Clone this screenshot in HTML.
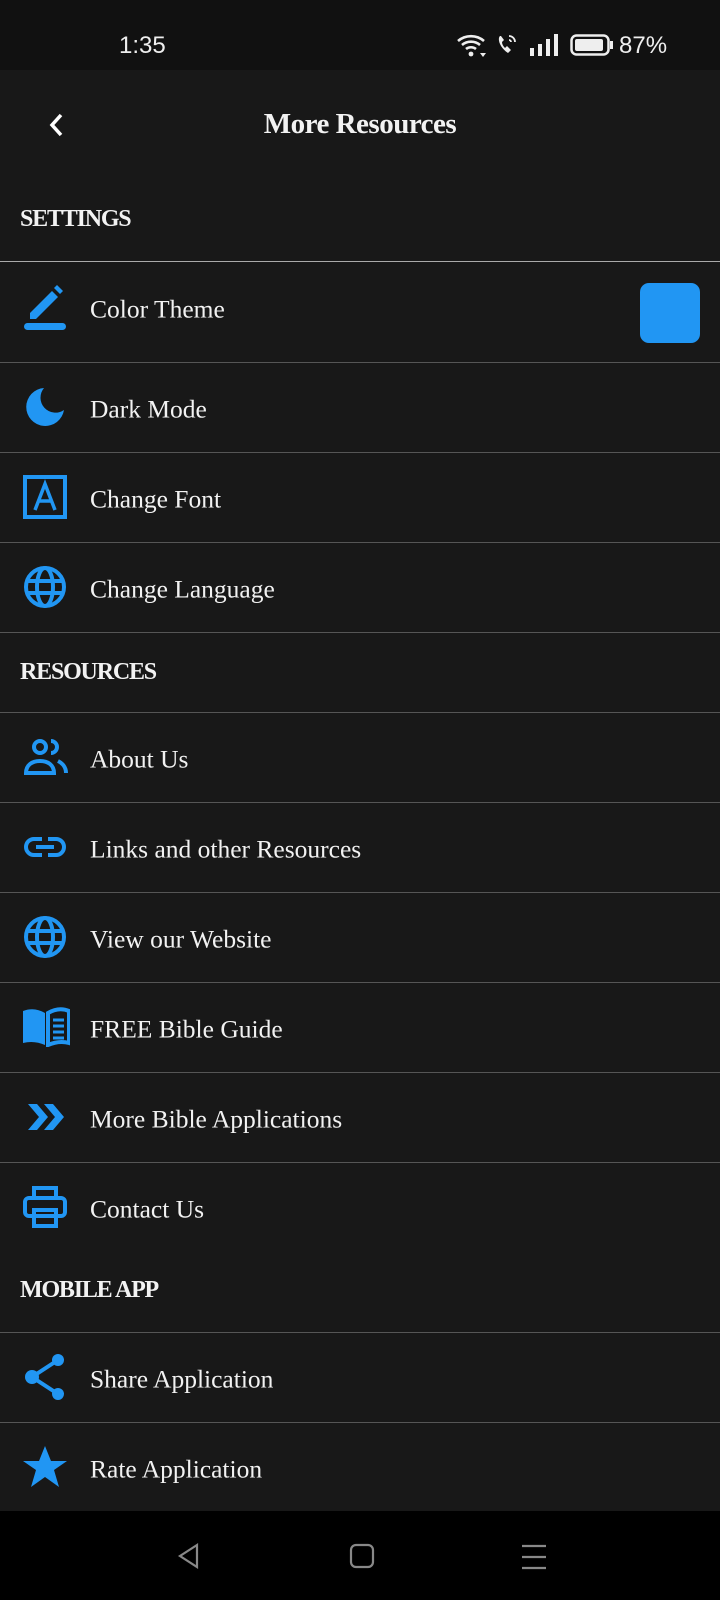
<!DOCTYPE html>
<html><head><meta charset="utf-8"><style>
*{margin:0;padding:0;box-sizing:border-box}
body{width:720px;height:1600px;background:#181818;font-family:"Liberation Serif",serif;color:#f2f2f2;position:relative;overflow:hidden}
.sb{position:absolute;top:0;left:0;width:720px;height:70px;background:#111;font-family:"Liberation Sans",sans-serif;color:#eee;font-size:23px}
.abs{position:absolute}
.title{position:absolute;top:108px;left:0;width:720px;text-align:center;font-size:29px;font-weight:bold;letter-spacing:-0.5px}
.hdr{position:absolute;left:20px;font-size:24px;font-weight:bold;letter-spacing:-1.2px}
.line{position:absolute;left:0;width:720px;height:1px;background:#555}
.row{position:absolute;left:0;width:720px;height:90px}
.row span{position:absolute;left:90px;top:50%;transform:translateY(-42%);font-size:25.5px}
.row svg{position:absolute;left:22px;top:50%;transform:translateY(-50%)}
.nav{position:absolute;top:1511px;left:0;width:720px;height:89px;background:#000}
</style></head><body>
<div class="sb">
<div class="abs" style="left:119px;top:32px;font-size:24px">1:35</div>
<svg class="abs" style="left:456px;top:32px" width="32" height="26" viewBox="0 0 32 26"><path d="M2 9a20 20 0 0 1 26 0M6 13a14 14 0 0 1 18 0M10 17a8 8 0 0 1 10 0" stroke="#eee" stroke-width="2.6" fill="none"/><circle cx="15" cy="22" r="2.4" fill="#eee"/><path d="M24 21h6l-3 4z" fill="#eee"/></svg>
<svg class="abs" style="left:496px;top:33px" width="22" height="24" viewBox="0 0 22 24"><path d="M4 3c-3 3 0 12 8 17l3-3-4-4-2 2c-2-2-3-4-3-6l2-2-3-4z" fill="#eee"/><path d="M13 3a6 6 0 0 1 6 6M13 7a2 2 0 0 1 2 2" stroke="#eee" stroke-width="1.8" fill="none"/></svg>
<svg class="abs" style="left:529px;top:34px" width="30" height="22" viewBox="0 0 30 22"><rect x="1" y="14" width="4" height="8" fill="#eee"/><rect x="9" y="10" width="4" height="12" fill="#eee"/><rect x="17" y="5" width="4" height="17" fill="#eee"/><rect x="25" y="0" width="4" height="22" fill="#eee"/></svg>
<svg class="abs" style="left:570px;top:34px" width="44" height="22" viewBox="0 0 44 22"><rect x="1.5" y="1.5" width="37" height="19" rx="5" stroke="#eee" stroke-width="2.5" fill="none"/><rect x="5" y="5" width="28" height="12" rx="2" fill="#eee"/><rect x="40" y="7" width="3" height="8" fill="#eee"/></svg>
<div class="abs" style="left:619px;top:32px;font-size:24px">87%</div>
</div>
<svg class="abs" style="left:46px;top:112px" width="20" height="26" viewBox="0 0 20 26"><path d="M15 3L6 13l9 10" stroke="#fff" stroke-width="3.5" fill="none"/></svg>
<div class="title">More Resources</div>

<div class="hdr" style="top:206px">SETTINGS</div>
<div class="line" style="top:261px;background:#aaa"></div>
<div class="row" style="top:262px"><svg width="46" height="48" viewBox="0 0 46 48"><path d="M8 30L30 8l6 6-22 22H8z" fill="#2196f3"/><path d="M32 5l3-3 6 6-3 3z" fill="#2196f3"/><rect x="2" y="40" width="42" height="7" rx="3.5" fill="#2196f3"/></svg><span>Color Theme</span><div class="abs" style="left:640px;top:21px;width:60px;height:60px;border-radius:9px;background:#2196f3"></div></div>
<div class="line" style="top:362px"></div>
<div class="row" style="top:362px"><svg width="46" height="46" viewBox="0 0 46 46"><path d="M22 4a19 19 0 1 0 20 22A15 15 0 0 1 22 4z" fill="#2196f3"/></svg><span>Dark Mode</span></div>
<div class="line" style="top:452px"></div>
<div class="row" style="top:452px"><svg width="46" height="46" viewBox="0 0 46 46"><rect x="3" y="3" width="40" height="40" stroke="#2196f3" stroke-width="4" fill="none"/><path d="M13 36l10-26 10 26M17 27h12" stroke="#2196f3" stroke-width="3.5" fill="none"/></svg><span>Change Font</span></div>
<div class="line" style="top:542px"></div>
<div class="row" style="top:542px"><svg width="46" height="46" viewBox="0 0 46 46"><g stroke="#2196f3" stroke-width="4" fill="none"><circle cx="23" cy="23" r="19"/><ellipse cx="23" cy="23" rx="8" ry="19"/><path d="M4 17h38M4 29h38"/></g></svg><span>Change Language</span></div>
<div class="line" style="top:632px"></div>
<div class="hdr" style="top:659px">RESOURCES</div>
<div class="line" style="top:712px"></div>
<div class="row" style="top:712px"><svg width="48" height="40" viewBox="0 0 48 40"><g stroke="#2196f3" stroke-width="4" fill="none"><circle cx="18" cy="10" r="6"/><path d="M4 36c0-8 6-12 14-12s14 4 14 12z"/><path d="M29 4a6 6 0 0 1 0 12M36 24c4 2 8 6 8 12"/></g></svg><span>About Us</span></div>
<div class="line" style="top:802px"></div>
<div class="row" style="top:802px"><svg width="46" height="46" viewBox="0 0 46 46"><g stroke="#2196f3" stroke-width="4" fill="none"><path d="M20 15h-8a8 8 0 0 0 0 16h8M26 15h8a8 8 0 0 1 0 16h-8M14 23h18"/></g></svg><span>Links and other Resources</span></div>
<div class="line" style="top:892px"></div>
<div class="row" style="top:892px"><svg width="46" height="46" viewBox="0 0 46 46"><g stroke="#2196f3" stroke-width="4" fill="none"><circle cx="23" cy="23" r="19"/><ellipse cx="23" cy="23" rx="8" ry="19"/><path d="M4 17h38M4 29h38"/></g></svg><span>View our Website</span></div>
<div class="line" style="top:982px"></div>
<div class="row" style="top:982px"><svg width="48" height="40" viewBox="0 0 48 40"><path d="M1 4c8-3 15-2 22 2v32c-7-3-14-4-22-2z" fill="#2196f3"/><path d="M26 6c7-4 14-5 21-2v32c-7-2-14-1-21 2z" stroke="#2196f3" stroke-width="4" fill="none"/><path d="M31 13h11M31 19h11M31 25h11M31 31h11" stroke="#2196f3" stroke-width="3"/></svg><span>FREE Bible Guide</span></div>
<div class="line" style="top:1072px"></div>
<div class="row" style="top:1072px"><svg width="46" height="46" viewBox="0 0 46 46"><path d="M6 10h9l11 13-11 13H6l11-13zM22 10h9l11 13-11 13h-9l11-13z" fill="#2196f3"/></svg><span>More Bible Applications</span></div>
<div class="line" style="top:1162px"></div>
<div class="row" style="top:1162px"><svg width="46" height="46" viewBox="0 0 46 46"><g stroke="#2196f3" stroke-width="4" fill="none"><path d="M12 14V4h22v10"/><rect x="3" y="14" width="40" height="18" rx="4"/><rect x="12" y="26" width="22" height="16"/></g></svg><span>Contact Us</span></div>
<div class="hdr" style="top:1277px">MOBILE APP</div>
<div class="line" style="top:1332px"></div>
<div class="row" style="top:1332px"><svg width="46" height="46" viewBox="0 0 46 46"><path d="M36 6L10 23l26 17" stroke="#2196f3" stroke-width="4" fill="none"/><circle cx="36" cy="6" r="6" fill="#2196f3"/><circle cx="10" cy="23" r="7" fill="#2196f3"/><circle cx="36" cy="40" r="6" fill="#2196f3"/></svg><span>Share Application</span></div>
<div class="line" style="top:1422px"></div>
<div class="row" style="top:1422px"><svg width="46" height="46" viewBox="0 0 46 46"><path d="M23 2l6 15h16l-13 9 5 17-14-10-14 10 5-17-13-9h16z" fill="#2196f3"/></svg><span>Rate Application</span></div>
<div class="nav">
<svg class="abs" style="left:177px;top:32px" width="24" height="26" viewBox="0 0 24 26"><path d="M20 2L3 13l17 11z" stroke="#888" stroke-width="2.2" fill="none"/></svg>
<svg class="abs" style="left:349px;top:32px" width="26" height="26" viewBox="0 0 26 26"><rect x="2" y="2" width="22" height="22" rx="5" stroke="#888" stroke-width="2.2" fill="none"/></svg>
<svg class="abs" style="left:521px;top:33px" width="26" height="26" viewBox="0 0 26 26"><path d="M1 2h24M1 13h24M1 24h24" stroke="#888" stroke-width="2.2"/></svg>
</div>
</body></html>
